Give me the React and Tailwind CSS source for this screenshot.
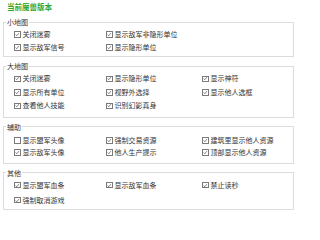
import React from 'react';

const groups = [
  {
    title: '小地图',
    gap: 'mt-[7px]',
    pad: 'pt-[2px] pb-[2px]',
    row: 'h-[13px]',
    items: [
      ['关闭迷雾', true],
      ['显示敌军非隐形单位', true],
      null,
      ['显示敌军信号', true],
      ['显示隐形单位', true],
    ],
  },
  {
    title: '大地图',
    gap: 'mt-[5px]',
    pad: 'pt-[2px] pb-[4px]',
    row: 'h-[13.5px]',
    items: [
      ['关闭迷雾', true],
      ['显示隐形单位', true],
      ['显示神符', true],
      ['显示所有单位', true],
      ['视野外选择', true],
      ['显示他人选框', true],
      ['查看他人技能', true],
      ['识别幻影真身', true],
    ],
  },
  {
    title: '辅助',
    gap: 'mt-[5px]',
    pad: 'pt-[4px] pb-[4px]',
    row: 'h-[12px]',
    items: [
      ['显示盟军头像', false],
      ['强制交易资源', true],
      ['建筑里显示他人资源', true],
      ['显示敌军头像', true],
      ['他人生产提示', true],
      ['顶部显示他人资源', true],
    ],
  },
  {
    title: '其他',
    gap: 'mt-[5px]',
    pad: 'pt-[1px] pb-[1px]',
    row: 'h-[15px]',
    items: [
      ['显示盟军血条', true],
      ['显示敌军血条', true],
      ['禁止读秒', true],
      ['强制取消游戏', true],
    ],
  },
];

const Box = ({ checked }) => (
  <span className="flex h-[6.5px] w-[6.5px] shrink-0 items-center justify-center border border-[#7a7a7a] bg-white">
    {checked && (
      <svg viewBox="0 0 6 6" className="h-[5px] w-[5px]">
        <path d="M0.8 3.1 L2.4 4.6 L5.2 1.2" fill="none" stroke="#444" strokeWidth="0.9" />
      </svg>
    )}
  </span>
);

const App = () => {
  return (
    <div
      className="h-[210px] w-[297px] overflow-hidden bg-white text-[#333]"
      style={{ fontFamily: '"Noto Sans CJK SC", "Noto Sans", sans-serif' }}
    >
      <div className="mt-[3px] ml-[7px] text-[7.5px] font-bold leading-[8px] text-[#2ea62e]">当前魔兽版本</div>
      {groups.map((g) => (
        <fieldset key={g.title} className={`mx-[3px] border border-[#dcdcdc] ${g.gap}`}>
          <legend className="ml-[2px] px-[1px] text-[7px] leading-[8px] text-[#333]">{g.title}</legend>
          <div className={`grid grid-cols-[92px_96px_1fr] pl-[10px] ${g.pad}`}>
            {g.items.map((it, i) =>
              it ? (
                <div key={i} className={`flex items-center gap-[2px] ${g.row}`}>
                  <Box checked={it[1]} />
                  <span className="whitespace-nowrap text-[7px] leading-none">{it[0]}</span>
                </div>
              ) : (
                <div key={i} className={g.row} />
              )
            )}
          </div>
        </fieldset>
      ))}
    </div>
  );
};

export default App;
